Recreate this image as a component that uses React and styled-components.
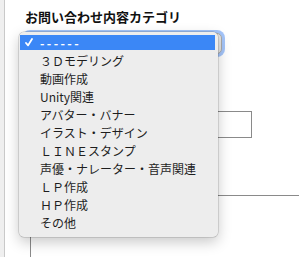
import React from "react";
import styled, { createGlobalStyle } from "styled-components";

const GlobalStyle = createGlobalStyle`
  body {
    margin: 0;
    background: #fff;
    font-family: "Noto Sans CJK JP", "Noto Sans", sans-serif;
  }
`;

const Page = styled.div`
  position: relative;
  display: flex;
  width: 299px;
  height: 257px;
  overflow: hidden;
`;

const SideStrip = styled.div`
  flex: 0 0 4px;
  background: #efefef;
  border-right: 1px solid #c9c9c9;
`;

const Main = styled.div`
  flex: 1;
  min-width: 0;
  padding: 8px 0 0 20px;
`;

const Label = styled.div`
  font-size: 13px;
  font-weight: 700;
  line-height: 18px;
  color: #111;
`;

const SelectBox = styled.div`
  margin-top: 7px;
  width: 195px;
  height: 19px;
  border: 1px solid #a9a9a9;
  border-radius: 5px;
  background: #e4e4e4;
  box-shadow: 0 0 0 3px rgba(90, 150, 245, 0.55);
`;

const Fields = styled.div`
  margin-left: 5px;
  display: flex;
  flex-direction: column;
`;

const TextInput = styled.div`
  margin-top: 57px;
  width: 220px;
  height: 25px;
  border: 1px solid #8a8a8a;
`;

const TextArea = styled.div`
  margin-top: 57px;
  width: 300px;
  height: 120px;
  border: 1px solid #8a8a8a;
`;

const Menu = styled.ul`
  position: absolute;
  left: 19px;
  top: 32px;
  width: 199px;
  margin: 0;
  padding: 2px 0 5px;
  box-sizing: border-box;
  list-style: none;
  background: #ededed;
  border-radius: 5px;
  box-shadow: 0 0 0 0.5px rgba(0, 0, 0, 0.22), 0 5px 14px rgba(0, 0, 0, 0.22);
`;

const Option = styled.li`
  display: grid;
  grid-template-columns: 21px 1fr;
  align-items: center;
  height: 18px;
  font-size: 12px;
  line-height: 18px;
  white-space: nowrap;
  color: ${(p) => (p.$selected ? "#fff" : "#1e1e1e")};
  background: ${(p) =>
    p.$selected
      ? "linear-gradient(#3b87f6, #3b87f6) 1px 1px / calc(100% - 4px) 15px no-repeat"
      : "none"};
`;

const CheckCell = styled.span`
  display: flex;
  padding-left: 6px;
  margin-top: -1px;
`;

const Dashes = styled.span`
  font-weight: 700;
  letter-spacing: 2.4px;
  margin-top: -1px;
`;

const options = [
  "３Ｄモデリング",
  "動画作成",
  "Unity関連",
  "アバター・バナー",
  "イラスト・デザイン",
  "ＬＩＮＥスタンプ",
  "声優・ナレーター・音声関連",
  "ＬＰ作成",
  "ＨＰ作成",
  "その他",
];

const Check = () => (
  <svg width="8" height="9" viewBox="0 0 8 9">
    <path
      d="M1 5 L3.1 7.4 L7 1"
      fill="none"
      stroke="#fff"
      strokeWidth="1.8"
      strokeLinecap="round"
      strokeLinejoin="round"
    />
  </svg>
);

export default function App() {
  return (
    <>
      <GlobalStyle />
      <Page>
        <SideStrip />
        <Main>
          <Label>お問い合わせ内容カテゴリ</Label>
          <SelectBox />
          <Fields>
            <TextInput />
            <TextArea />
          </Fields>
        </Main>
        <Menu>
          <Option $selected>
            <CheckCell>
              <Check />
            </CheckCell>
            <Dashes>------</Dashes>
          </Option>
          {options.map((o) => (
            <Option key={o}>
              <span />
              <span>{o}</span>
            </Option>
          ))}
        </Menu>
      </Page>
    </>
  );
}
